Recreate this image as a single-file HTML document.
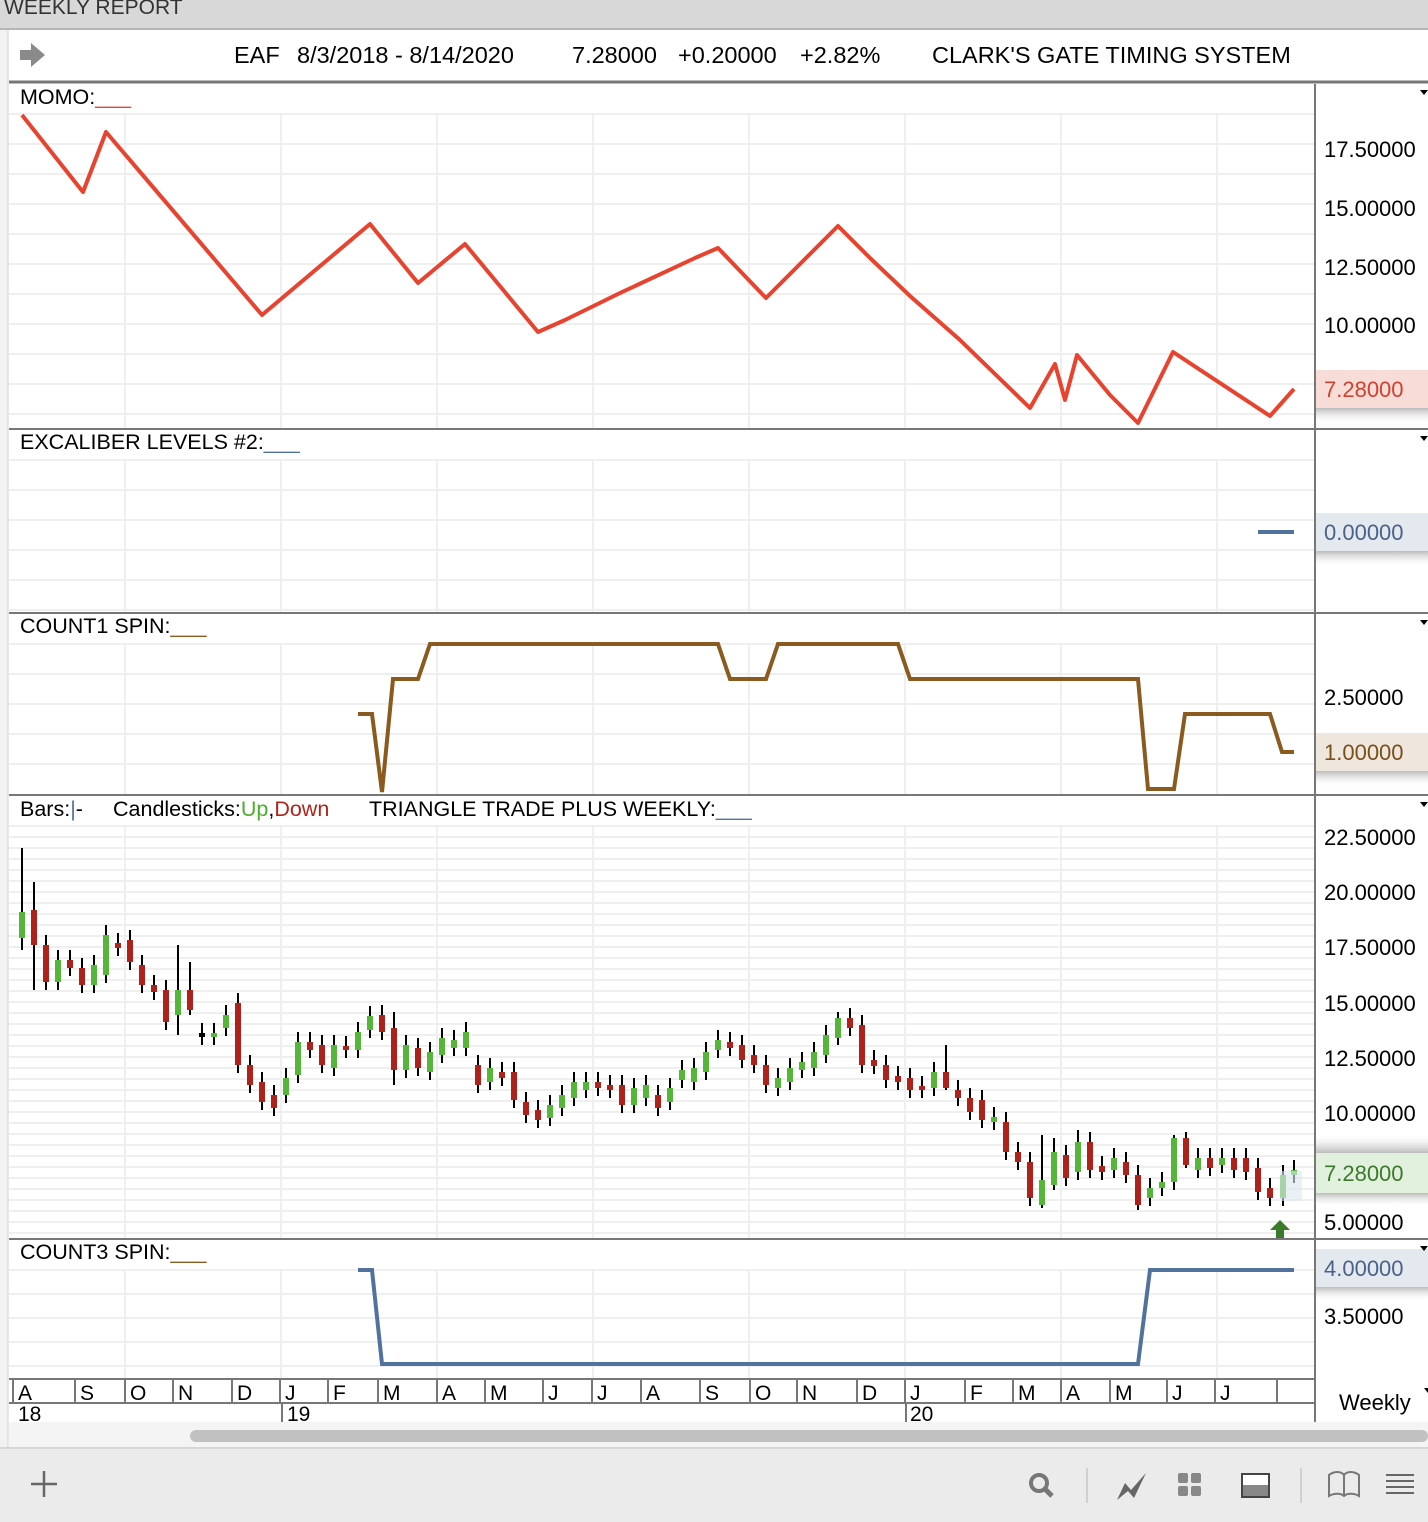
<!DOCTYPE html>
<html><head><meta charset="utf-8"><style>
html,body{margin:0;padding:0;width:1428px;height:1522px;overflow:hidden;background:#fff;font-family:"Liberation Sans",Arial,sans-serif}
svg{position:absolute;left:0;top:0}
</style></head><body>
<svg id="s" width="1428" height="1522" xmlns="http://www.w3.org/2000/svg" font-family="Liberation Sans, Arial, sans-serif">
<defs><linearGradient id="sh" x1="0" y1="0" x2="0" y2="1"><stop offset="0" stop-color="#bbb"/><stop offset="1" stop-color="#fff" stop-opacity="0"/></linearGradient></defs>
<rect x="0" y="0" width="1428" height="30" fill="#d9d8d9"/>
<line x1="0" y1="29" x2="1428" y2="29" fill="none" stroke="#b5b5b5" stroke-width="2"/>
<text x="4" y="14" font-size="21" fill="#333">WEEKLY REPORT</text>
<rect x="0" y="30" width="8" height="1418" fill="#f2f2f2"/>
<line x1="8" y1="30" x2="8" y2="1448" stroke="#d0d0d0" stroke-width="1"/>
<g id="grid"></g>
<!-- header -->
<path d="M20,50 h11 v-7 l14,12 l-14,12 v-7 h-11z" fill="#8a8a8a"/>
<g font-size="23.5" fill="#000">
<text x="234" y="63">EAF</text><text x="297" y="63">8/3/2018 - 8/14/2020</text>
<text x="572" y="63">7.28000</text><text x="678" y="63">+0.20000</text><text x="800" y="63">+2.82%</text>
<text x="932" y="63">CLARK'S GATE TIMING SYSTEM</text></g>
<!-- separators -->
<g stroke="#777" stroke-width="2">
<line x1="9" y1="82" x2="1428" y2="82" stroke-width="3"/>
<line x1="9" y1="429" x2="1428" y2="429"/>
<line x1="9" y1="613" x2="1428" y2="613"/>
<line x1="9" y1="795" x2="1428" y2="795"/>
<line x1="9" y1="1239" x2="1428" y2="1239"/>
<line x1="9" y1="1379" x2="1315" y2="1379"/>
<line x1="9" y1="1403" x2="1315" y2="1403"/>
<line x1="1315" y1="84" x2="1315" y2="1422"/>
</g>
<!-- right highlight labels -->
<rect x="1316" y="408" width="112" height="16" fill="url(#sh)"/>
<rect x="1316" y="551" width="112" height="16" fill="url(#sh)"/>
<rect x="1316" y="771" width="112" height="16" fill="url(#sh)"/>
<rect x="1316" y="1193" width="112" height="14" fill="url(#sh)"/>
<rect x="1316" y="1287" width="112" height="14" fill="url(#sh)"/>
<rect x="1316" y="1133" width="112" height="20" fill="url(#sh)" transform="rotate(180 1372 1143)"/>
<rect x="1316" y="370" width="112" height="38" fill="#f8dcd8"/>
<rect x="1316" y="513" width="112" height="38" fill="#e4e8ef"/>
<rect x="1316" y="733" width="112" height="38" fill="#efe6dd"/>
<rect x="1316" y="1153" width="112" height="40" fill="#e2f1de"/>
<rect x="1316" y="1249" width="112" height="38" fill="#e4e8ef"/>
<g font-size="22" fill="#000">
<text x="1324" y="157">17.50000</text><text x="1324" y="216">15.00000</text><text x="1324" y="275">12.50000</text><text x="1324" y="333">10.00000</text>
<text x="1324" y="397" fill="#d0412e">7.28000</text>
<text x="1324" y="540" fill="#4a6288">0.00000</text>
<text x="1324" y="705">2.50000</text><text x="1324" y="760" fill="#7a4f1c">1.00000</text>
<text x="1324" y="845">22.50000</text><text x="1324" y="900">20.00000</text><text x="1324" y="955">17.50000</text><text x="1324" y="1011">15.00000</text><text x="1324" y="1066">12.50000</text><text x="1324" y="1121">10.00000</text>
<text x="1324" y="1181" fill="#3a7a2a">7.28000</text><text x="1324" y="1230">5.00000</text>
<text x="1324" y="1276" fill="#4a6288">4.00000</text><text x="1324" y="1324">3.50000</text>
<text x="1339" y="1410">Weekly</text>
</g>
<g fill="#000"><path d="M1420,90h8l-4,5z"/><path d="M1420,436h8l-4,5z"/><path d="M1420,620h8l-4,5z"/><path d="M1420,802h8l-4,5z"/><path d="M1420,1246h8l-4,5z"/><path d="M1424,1388h4v5z"/></g>
<!-- panel labels -->
<g font-size="21.5" fill="#000">
<text x="20" y="104">MOMO:<tspan fill="#e8432e">___</tspan></text>
<text x="20" y="449">EXCALIBER LEVELS #2:<tspan fill="#52729e">___</tspan></text>
<text x="20" y="633">COUNT1 SPIN:<tspan fill="#8b5a1e">___</tspan></text>
<text x="20" y="816">Bars:<tspan fill="#52729e">|</tspan>-</text>
<text x="113" y="816">Candlesticks:<tspan fill="#4cae2e">Up</tspan>,<tspan fill="#b0241c">Down</tspan></text>
<text x="369" y="816">TRIANGLE TRADE PLUS WEEKLY:<tspan fill="#52729e">___</tspan></text>
<text x="20" y="1259">COUNT3 SPIN:<tspan fill="#8b5a1e">___</tspan></text>
</g>
<!-- lines -->
<polyline fill="none" stroke="#e8432e" stroke-width="4" stroke-linejoin="round" points="22,115 83,192 106,132 262,315 370,224 418,283 465,244 538,332 565,320 620,293 695,258 718,248 766,298 838,226 870,258 910,296 960,340 1030,408 1055,364 1065,400 1077,355 1110,395 1138,423 1173,352 1270,416 1294,389"/>
<line x1="1258" y1="532" x2="1294" y2="532" stroke="#52729e" stroke-width="4"/>
<polyline fill="none" stroke="#8b5a1e" stroke-width="4" points="358,714 372,714 382,792 393,679 418,679 430,644 718,644 730,679 766,679 778,644 898,644 910,679 1138,679 1148,789 1174,789 1185,714 1270,714 1282,752 1294,752"/>
<polyline fill="none" stroke="#52729e" stroke-width="4" points="358,1270 372,1270 382,1364 1138,1364 1150,1270 1294,1270"/>
<g id="candles"></g>
<rect x="1280" y="1171" width="22" height="30" fill="#dde6f2" opacity="0.6"/>
<path d="M1280,1220 l-10,10 h6 v8 h8 v-8 h6 z" fill="#3a7a2a"/>
<!-- date axis -->
<g id="dates" font-size="21" fill="#000"></g>
<!-- scrollbar & toolbar -->
<rect x="9" y="1422" width="1419" height="26" fill="#f4f4f4"/>
<rect x="190" y="1430" width="1238" height="12" rx="6" fill="#c1c1c1"/>
<rect x="0" y="1448" width="1428" height="74" fill="#ebebeb"/>
<line x1="0" y1="1448" x2="1428" y2="1448" stroke="#d6d6d6" stroke-width="2"/>
<g stroke="#666" stroke-width="2.5" fill="none">
<path d="M44,1471v26M31,1484h26"/>
<circle cx="1039" cy="1483" r="8" stroke="#777" stroke-width="4"/><path d="M1045,1489l7,7" stroke="#777" stroke-width="5"/>
<path d="M1087,1468v35M1301,1468v35" stroke="#d0d0d0" stroke-width="2"/>
<path d="M1329,1475c5,-4 12,-4 15,0c3,-4 10,-4 15,0v21c-5,-3 -12,-3 -15,0c-3,-3 -10,-3 -15,0z M1344,1475v21" stroke="#777" stroke-width="2"/>
<path d="M1386,1475h28M1386,1481h28M1386,1487h28M1386,1493h28" stroke="#666" stroke-width="2"/>
</g>
<path d="M1117,1500l8,-17l6,7l15,-17l-12,25l-6,-7z" fill="#666"/>
<g fill="#888"><rect x="1178" y="1473" width="10" height="10" rx="2"/><rect x="1191" y="1473" width="10" height="10" rx="2"/><rect x="1178" y="1486" width="10" height="10" rx="2"/><rect x="1191" y="1486" width="10" height="10" rx="2"/></g>
<rect x="1242" y="1474" width="27" height="23" fill="#fff" stroke="#444" stroke-width="2"/><rect x="1243" y="1485" width="25" height="11" fill="#888"/>
</svg>
<script>
var NS="http://www.w3.org/2000/svg";
function el(p,t,a){var e=document.createElementNS(NS,t);for(var k in a)e.setAttribute(k,a[k]);p.appendChild(e);return e;}
var g=document.getElementById('grid');
var vx=[125,281,437,593,749,905,1061,1217];
[[84,428,30],[430,612,30],[614,794,30],[796,1238,11],[1240,1378,24]].forEach(function(p){
  for(var y=p[0]+30;y<p[1];y+=p[2]) el(g,'line',{x1:9,x2:1314,y1:y,y2:y,stroke:'#efefef','stroke-width':2});
  vx.forEach(function(x){el(g,'line',{x1:x,x2:x,y1:p[0]+30,y2:p[1],stroke:'#efefef','stroke-width':2});});
});
var c=[[22,912,938,'g'],[34,910,945,'r'],[46,945,982,'r'],[58,960,982,'g'],[70,960,968,'r'],[82,968,985,'r'],[94,965,985,'g'],[106,935,975,'g'],[118,943,948,'r'],[130,940,962,'r'],[142,965,985,'r'],[154,985,992,'r'],[166,990,1022,'r'],[178,990,1015,'g'],[190,990,1010,'r'],[202,1033,1037,'n'],[214,1033,1037,'g'],[226,1015,1028,'g'],[238,1003,1065,'r'],[250,1065,1085,'r'],[262,1082,1102,'r'],[274,1095,1108,'r'],[286,1078,1095,'g'],[298,1042,1075,'g'],[310,1042,1050,'r'],[322,1045,1065,'r'],[334,1045,1068,'g'],[346,1046,1050,'r'],[358,1032,1050,'g'],[370,1016,1030,'g'],[382,1015,1032,'r'],[394,1028,1070,'r'],[406,1045,1070,'g'],[418,1048,1068,'r'],[430,1052,1072,'g'],[442,1038,1055,'g'],[454,1040,1048,'g'],[466,1032,1048,'g'],[478,1065,1085,'r'],[490,1068,1082,'g'],[502,1072,1078,'r'],[514,1072,1100,'r'],[526,1102,1115,'r'],[538,1110,1120,'r'],[550,1105,1118,'g'],[562,1095,1108,'g'],[574,1082,1098,'g'],[586,1082,1090,'g'],[598,1082,1088,'r'],[610,1085,1090,'r'],[622,1085,1105,'r'],[634,1088,1105,'g'],[646,1085,1098,'g'],[658,1095,1108,'r'],[670,1088,1102,'g'],[682,1070,1080,'g'],[694,1068,1082,'g'],[706,1052,1072,'g'],[718,1040,1050,'g'],[730,1042,1048,'r'],[742,1045,1060,'r'],[754,1055,1065,'r'],[766,1065,1085,'r'],[778,1078,1088,'g'],[790,1068,1082,'g'],[802,1062,1070,'g'],[814,1052,1068,'g'],[826,1035,1055,'g'],[838,1018,1038,'g'],[850,1018,1028,'r'],[862,1025,1065,'r'],[874,1060,1066,'r'],[886,1065,1080,'r'],[898,1076,1082,'r'],[910,1078,1090,'r'],[922,1086,1090,'r'],[934,1072,1088,'g'],[946,1072,1088,'r'],[958,1090,1098,'r'],[970,1098,1112,'r'],[982,1100,1120,'r'],[994,1117,1122,'g'],[1006,1122,1152,'r'],[1018,1152,1162,'r'],[1030,1162,1198,'r'],[1042,1180,1205,'g'],[1054,1152,1185,'g'],[1066,1155,1178,'r'],[1078,1142,1172,'g'],[1090,1142,1170,'r'],[1102,1166,1172,'r'],[1114,1158,1170,'g'],[1126,1162,1175,'r'],[1138,1175,1205,'r'],[1150,1188,1198,'g'],[1162,1182,1188,'g'],[1174,1138,1182,'g'],[1186,1138,1165,'r'],[1198,1158,1170,'g'],[1210,1158,1168,'r'],[1222,1158,1165,'g'],[1234,1158,1170,'r'],[1246,1158,1172,'r'],[1258,1168,1192,'r'],[1270,1188,1198,'r'],[1283,1175,1198,'g'],[1294,1170,1175,'g']];
var cg=document.getElementById('candles');
var big={22:[848,950],34:[882,990],178:[945,1035],190:[962,1015],394:[1012,1085],838:[1012,1045],946:[1045,1090],1042:[1135,1208],1054:[1138,1190],1078:[1130,1180],1138:[1165,1210],1174:[1135,1190],1186:[1132,1168]};
c.forEach(function(d){
  var w=big[d[0]]||[d[1]-10,d[2]+8];
  el(cg,'line',{x1:d[0],x2:d[0],y1:w[0],y2:w[1],stroke:'#000','stroke-width':2});
  var col=d[3]=='g'?'#55b63a':(d[3]=='r'?'#ad221a':'#000');
  el(cg,'rect',{x:d[0]-3,y:d[1],width:6,height:Math.max(3,d[2]-d[1]),fill:col});
});
var dg=document.getElementById('dates');
var m=[['A',18],['S',80],['O',130],['N',178],['D',237],['J',285],['F',333],['M',383],['A',442],['M',490],['J',548],['J',597],['A',646],['S',705],['O',755],['N',802],['D',862],['J',910],['F',970],['M',1018],['A',1066],['M',1115],['J',1172],['J',1220]];
m.forEach(function(a){var t=el(dg,'text',{x:a[1],y:1400});t.textContent=a[0];
  el(dg,'line',{x1:a[1]-5,x2:a[1]-5,y1:1379,y2:1403,stroke:'#777','stroke-width':2});});
el(dg,'line',{x1:1277,x2:1277,y1:1379,y2:1403,stroke:'#777','stroke-width':2});
[['18',18],['19',287],['20',910]].forEach(function(a){var t=el(dg,'text',{x:a[1],y:1421});t.textContent=a[0];});
el(dg,'line',{x1:282,x2:282,y1:1403,y2:1422,stroke:'#777','stroke-width':2});
el(dg,'line',{x1:906,x2:906,y1:1403,y2:1422,stroke:'#777','stroke-width':2});
</script>
</body></html>
